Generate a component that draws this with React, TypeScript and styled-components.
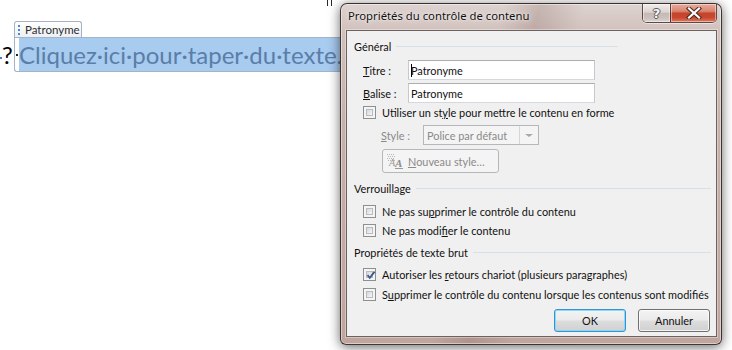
import React from "react";
import styled, { createGlobalStyle } from "styled-components";

const UI = `"Lato", "Segoe UI", sans-serif`;
const CAPTION = `"Noto Sans", "Segoe UI", sans-serif`;

const Global = createGlobalStyle`
  html, body { margin: 0; padding: 0; background: #ffffff; }
  body { width: 732px; height: 350px; overflow: hidden; }
  * { box-sizing: border-box; }
`;

const Page = styled.div`
  position: relative;
  width: 732px;
  height: 350px;
  overflow: hidden;
  background: #ffffff;
`;

/* ---------- Document (Word page behind the dialog) ---------- */

const Doc = styled.div`
  display: flex;
  flex-direction: column;
`;

const Marks = styled.div`
  margin-left: 327px;
  width: 5px;
  height: 6px;
  border-left: 1px solid #2a2a2a;
  border-right: 1px solid #2a2a2a;
`;

const TagTab = styled.div`
  margin-top: 15px;
  margin-left: 14px;
  width: 68px;
  height: 16px;
  border: 1px solid #a6b3c4;
  border-bottom: none;
  border-radius: 3px 3px 0 0;
  background: linear-gradient(#ffffff, #eceff4);
  display: flex;
  align-items: center;
  padding-left: 3px;
  gap: 5px;
  font: 11.5px ${UI};
  color: #2e2e2e;
`;

const Grip = styled.span`
  width: 2px;
  height: 10px;
  background: repeating-linear-gradient(#4a86d8 0 2px, transparent 2px 4px);
`;

const ContentRow = styled.div`
  display: flex;
  align-items: stretch;
  height: 35px;
  font-family: "Lato", "Carlito", sans-serif;
  font-size: 24px;
`;

const Lead = styled.div`
  width: 14px;
  flex: none;
  display: flex;
  align-items: center;
  color: #000;
  position: relative;
  padding-left: 2px;
`;

const BlueTick = styled.span`
  position: absolute;
  left: 0;
  top: 20px;
  width: 2px;
  height: 2px;
  background: #4a7fc8;
`;

const ControlBox = styled.div`
  display: flex;
  align-items: stretch;
  border: 1px solid #a6b3c4;
  border-right: none;
  border-radius: 0 0 0 3px;
  width: 360px;
  flex: none;
`;

const SpaceDot = styled.span`
  width: 4px;
  flex: none;
  display: flex;
  align-items: center;
  padding-left: 1px;
  &::before {
    content: "";
    width: 2px;
    height: 2px;
    background: #222;
  }
`;

const Highlight = styled.div`
  flex: 1;
  background: #a8cbf0;
  color: #5a7ea8;
  display: flex;
  align-items: center;
  white-space: nowrap;
`;

/* ---------- Dialog window ---------- */

const Window = styled.div`
  position: absolute;
  left: 340px;
  top: 3px;
  width: 382px;
  height: 342px;
  border: 1px solid rgba(38, 28, 26, 0.85);
  border-radius: 7px 7px 6px 6px;
  background:
    linear-gradient(102deg, transparent 36%, rgba(120, 85, 78, 0.22) 44%, transparent 54%),
    linear-gradient(#ddd3d0 0px, #d0bfba 30px, #c6b0aa 120px, #bfa59e 100%);
  box-shadow: 0 2px 12px rgba(0, 0, 0, 0.6), inset 0 0 0 1px rgba(255, 255, 255, 0.45);
  display: flex;
  flex-direction: column;
  padding: 0 4px 7px 5px;
  font: 10.9px ${UI};
  color: #111;
`;

const TitleBar = styled.div`
  height: 26px;
  flex: none;
  display: flex;
  align-items: flex-start;
`;

const TitleText = styled.div`
  flex: 1;
  margin-top: 4px;
  padding-left: 2px;
  line-height: 15px;
  font: 11.3px ${CAPTION};
  color: #111;
  text-shadow: 0 0 6px rgba(255, 255, 255, 0.9), 0 0 2px rgba(255, 255, 255, 0.8);
`;

const CaptionButtons = styled.div`
  display: flex;
  height: 19px;
  border: 1px solid rgba(50, 32, 30, 0.75);
  border-top: none;
  border-radius: 0 0 5px 5px;
  overflow: hidden;
  box-shadow: 0 1px 0 rgba(255, 255, 255, 0.5);
`;

const CaptionButton = styled.div<{ $close?: boolean }>`
  width: ${(p) => (p.$close ? 46 : 27)}px;
  height: 100%;
  display: flex;
  align-items: center;
  justify-content: center;
  box-shadow: inset 0 0 0 1px rgba(255, 255, 255, 0.45);
  border-left: ${(p) => (p.$close ? "1px solid rgba(50,32,30,0.75)" : "none")};
  background: ${(p) =>
    p.$close
      ? "linear-gradient(#e8aa9c 0%, #d98672 40%, #c4442c 52%, #c9472f 75%, #de7a5c 100%)"
      : "linear-gradient(#f1ecea 0%, #ddd4d1 45%, #c6b9b5 52%, #cdc2bf 80%, #ddd6d4 100%)"};
`;

const HelpGlyph = styled.span`
  font: bold 13px "DejaVu Sans", sans-serif;
  line-height: 13px;
  color: #f6f6f6;
  text-shadow: 1px 0 0 #5a5a5a, -1px 0 0 #5a5a5a, 0 1px 0 #5a5a5a, 0 -1px 0 #5a5a5a;
`;

const Client = styled.div`
  height: 307px;
  flex: none;
  border: 1px solid #6e6260;
  background: #f0f0f0;
  display: flex;
  flex-direction: column;
  box-shadow: 0 0 0 1px rgba(255, 255, 255, 0.35);
`;

const GroupHeader = styled.div<{ $top: number; $end: number }>`
  margin-top: ${(p) => p.$top}px;
  height: 15px;
  line-height: 15px;
  display: flex;
  align-items: center;
  padding-left: 7px;
  padding-right: ${(p) => p.$end}px;
  gap: 5px;
  &::after {
    content: "";
    flex: 1;
    height: 1px;
    background: #d5dfe5;
  }
`;

const FieldRow = styled.div<{ $top: number }>`
  margin-top: ${(p) => p.$top}px;
  display: flex;
  align-items: center;
  padding-left: 16px;
  height: 20px;
`;

const FieldLabel = styled.span`
  width: 45px;
  flex: none;
`;

const U = styled.span`
  text-decoration: underline;
  text-underline-offset: 1px;
`;

const TextInput = styled.div`
  width: 187px;
  height: 20px;
  border: 1px solid #abadb3;
  border-left-color: #c5c9cf;
  border-right-color: #c5c9cf;
  border-bottom-color: #d5d9de;
  background: #ffffff;
  display: flex;
  align-items: center;
  padding-left: 2px;
`;

const Caret = styled.span`
  width: 0;
  height: 13px;
  border-left: 1px solid #000;
  margin-right: -1px;
`;

const CheckRow = styled.label<{ $top: number }>`
  margin-top: ${(p) => p.$top}px;
  display: flex;
  align-items: center;
  gap: 6px;
  padding-left: 16px;
  height: 13px;
  line-height: 13px;
  white-space: nowrap;
`;

const CheckBox = styled.span`
  position: relative;
  width: 13px;
  height: 13px;
  flex: none;
  border: 1px solid #8e8f8f;
  background: #f4f4f4;
  padding: 2px;
  display: flex;
  &::before {
    content: "";
    flex: 1;
    border: 1px solid #b8bcc1;
    background: linear-gradient(135deg, #d3d6db, #f7f7f7);
  }
`;

const CheckMark = styled.svg`
  position: absolute;
  left: 1px;
  top: 0px;
`;

const StyleRow = styled.div`
  margin-top: 6px;
  height: 20px;
  display: flex;
  align-items: center;
  padding-left: 34px;
  color: #8a8a8a;
`;

const StyleLabel = styled.span`
  width: 42px;
  flex: none;
`;

const Combo = styled.div`
  width: 116px;
  height: 20px;
  border: 1px solid #b5b8bb;
  background: #f4f4f4;
  display: flex;
  align-items: stretch;
`;

const ComboText = styled.span`
  flex: 1;
  padding-left: 3px;
  display: flex;
  align-items: center;
  white-space: nowrap;
`;

const ComboArrow = styled.span`
  width: 19px;
  flex: none;
  border-left: 1px solid #d6d6d6;
  display: flex;
  align-items: center;
  justify-content: center;
  &::before {
    content: "";
    border-left: 4px solid transparent;
    border-right: 4px solid transparent;
    border-top: 3px solid #a8a8a8;
  }
`;

const NewStyleButton = styled.div`
  margin-top: 4px;
  margin-left: 35px;
  width: 117px;
  height: 24px;
  border: 1px solid #b5b8bb;
  border-radius: 3px;
  background: #f4f4f4;
  display: flex;
  align-items: center;
  padding-left: 3px;
  gap: 4px;
  color: #8a8a8a;
`;

const ButtonRow = styled.div`
  margin-top: 8px;
  display: flex;
  justify-content: flex-end;
  gap: 12px;
  padding-right: 6px;
`;

const PushButton = styled.div<{ $default?: boolean }>`
  width: 72px;
  height: 23px;
  border: 1px solid ${(p) => (p.$default ? "#3c8fd0" : "#707070")};
  border-radius: 3px;
  display: flex;
  align-items: center;
  justify-content: center;
  background: linear-gradient(#f3f3f3 0%, #ebebeb 48%, #dddddd 52%, #d0d0d0 100%);
  box-shadow: inset 0 0 0 1px ${(p) => (p.$default ? "rgba(120,220,250,0.9)" : "rgba(255,255,255,0.75)")};
`;

function Check({ checked, top, children }: { checked?: boolean; top: number; children: React.ReactNode }) {
  return (
    <CheckRow $top={top}>
      <CheckBox>
        {checked && (
          <CheckMark width="12" height="12" viewBox="0 0 12 12">
            <path d="M2.5 6.2 L4.8 8.8 L9.6 2.6" fill="none" stroke="#3f5a8a" strokeWidth="1.8" />
          </CheckMark>
        )}
      </CheckBox>
      <span>{children}</span>
    </CheckRow>
  );
}

function StyleIcon() {
  return (
    <svg width="18" height="16" viewBox="0 0 18 16">
      {[0, 2, 4, 6].map((y) =>
        [0, 2, 4, 6].map((x) => (
          <rect key={`${x}-${y}`} x={1 + x + (y % 4 ? 1 : 0)} y={1 + y} width="1" height="1" fill="#b8b8b8" />
        ))
      )}
      <text x="3" y="13" fontSize="10" fontFamily="Liberation Serif, serif" fontStyle="italic" fill="#9a9a9a">
        A
      </text>
      <text x="9" y="14" fontSize="11" fontFamily="Liberation Serif, serif" fontWeight="bold" fontStyle="italic" fill="#8c8c8c">
        A
      </text>
      <rect x="9" y="15" width="8" height="1" fill="#9a9a9a" />
    </svg>
  );
}

export default function App() {
  return (
    <Page>
      <Global />
      <Doc>
        <Marks />
        <TagTab>
          <Grip />
          <span>Patronyme</span>
        </TagTab>
        <ContentRow>
          <Lead>
            <BlueTick />?
          </Lead>
          <ControlBox>
            <SpaceDot />
            <Highlight>Cliquez·ici·pour·taper·du·texte.</Highlight>
          </ControlBox>
        </ContentRow>
      </Doc>

      <Window>
        <TitleBar>
          <TitleText>Propriétés du contrôle de contenu</TitleText>
          <CaptionButtons>
            <CaptionButton>
              <HelpGlyph>?</HelpGlyph>
            </CaptionButton>
            <CaptionButton $close>
              <svg width="16" height="12" viewBox="0 0 16 12">
                <path d="M3 1.5 L13 10.5 M13 1.5 L3 10.5" stroke="#4a2a24" strokeWidth="4.2" strokeLinecap="square" />
                <path d="M3 1.5 L13 10.5 M13 1.5 L3 10.5" stroke="#ffffff" strokeWidth="2.2" strokeLinecap="square" />
              </svg>
            </CaptionButton>
          </CaptionButtons>
        </TitleBar>

        <Client>
          <GroupHeader $top={8} $end={98}>Général</GroupHeader>
          <FieldRow $top={6}>
            <FieldLabel>
              <U>T</U>itre :
            </FieldLabel>
            <TextInput>
              <Caret />
              Patronyme
            </TextInput>
          </FieldRow>
          <FieldRow $top={3}>
            <FieldLabel>
              <U>B</U>alise :
            </FieldLabel>
            <TextInput>Patronyme</TextInput>
          </FieldRow>
          <Check top={3}>
            Utiliser un st<U>y</U>le pour mettre le contenu en forme
          </Check>
          <StyleRow>
            <StyleLabel>
              <U>S</U>tyle :
            </StyleLabel>
            <Combo>
              <ComboText>Police par défaut</ComboText>
              <ComboArrow />
            </Combo>
          </StyleRow>
          <NewStyleButton>
            <StyleIcon />
            <span>
              <U>N</U>ouveau style…
            </span>
          </NewStyleButton>

          <GroupHeader $top={8} $end={5}>Verrouillage</GroupHeader>
          <Check top={9}>
            Ne pas su<U>p</U>primer le contrôle du contenu
          </Check>
          <Check top={6}>
            Ne pas modi<U>f</U>ier le contenu
          </Check>

          <GroupHeader $top={8} $end={5}>Propriétés de texte brut</GroupHeader>
          <Check top={8} checked>
            Autoriser les <U>r</U>etours chariot (plusieurs paragraphes)
          </Check>
          <Check top={7}>
            S<U>u</U>pprimer le contrôle du contenu lorsque les contenus sont modifiés
          </Check>

          <ButtonRow>
            <PushButton $default>OK</PushButton>
            <PushButton>Annuler</PushButton>
          </ButtonRow>
        </Client>
      </Window>
    </Page>
  );
}
